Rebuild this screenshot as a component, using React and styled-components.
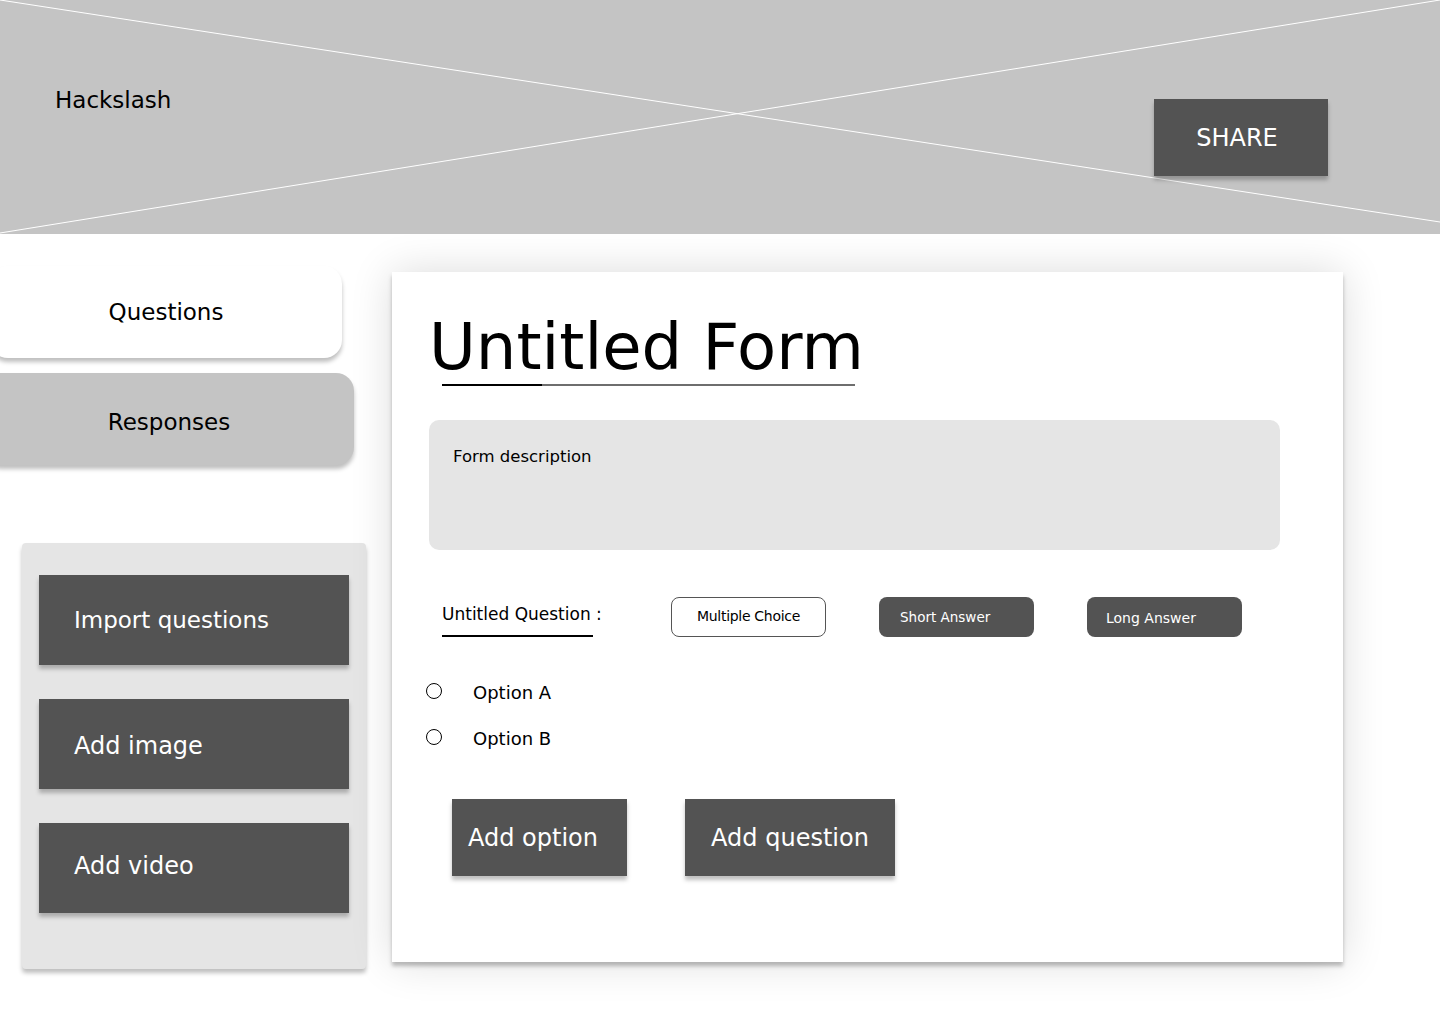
import React from "react";
import styled, { createGlobalStyle } from "styled-components";

const GlobalStyle = createGlobalStyle`
  html, body { margin: 0; padding: 0; background: #ffffff; }
  body {
    font-family: "DejaVu Sans", "Liberation Sans", sans-serif;
    color: #000;
    -webkit-font-smoothing: antialiased;
  }
  * { box-sizing: border-box; }
`;

const shiftY = (p) => {
  const d = p.$dy || 0;
  return `padding-top: ${Math.max(d * 2, 0)}px; padding-bottom: ${Math.max(-d * 2, 0)}px;`;
};

const Page = styled.div`
  width: 1440px;
  min-height: 1024px;
  overflow: hidden;
  background: #fff;
`;

const Header = styled.header`
  position: relative;
  height: 234px;
  display: flex;
  justify-content: space-between;
  align-items: flex-start;
  padding: 0 112px 0 55px;
  background-color: #c4c4c4;
`;

const Placeholder = styled.svg`
  position: absolute;
  inset: 0;
  width: 100%;
  height: 100%;
  pointer-events: none;
`;

const Brand = styled.div`
  position: relative;
  margin-top: 86px;
  font-size: 23px;
  line-height: 28px;
  color: #000;
`;

const DarkButton = styled.button`
  position: relative;
  border: none;
  background: #535353;
  color: #ffffff;
  font-family: inherit;
  font-size: ${(p) => p.$size || 24}px;
  width: ${(p) => p.$w}px;
  height: ${(p) => p.$h}px;
  box-shadow: 0 4px 4px rgba(0, 0, 0, 0.25);
  display: flex;
  align-items: center;
  justify-content: ${(p) => (p.$left !== undefined ? "flex-start" : "center")};
  padding-left: ${(p) => p.$left || 0}px;
  padding-right: ${(p) => p.$right || 0}px;
  ${shiftY}
  cursor: pointer;
`;

const ShareButton = styled(DarkButton)`
  margin-top: 99px;
`;

const Body = styled.div`
  display: flex;
  align-items: flex-start;
  gap: 26px;
`;

const LeftColumn = styled.aside`
  width: 366px;
  padding-top: 32px;
  display: flex;
  flex-direction: column;
`;

const Tab = styled.div`
  width: ${(p) => p.$w}px;
  margin-left: ${(p) => p.$offset}px;
  height: 92px;
  border-radius: 18px;
  background: ${(p) => (p.$active ? "#ffffff" : "#c4c4c4")};
  box-shadow: 0 4px 4px rgba(0, 0, 0, 0.25);
  display: flex;
  align-items: center;
  justify-content: center;
  ${shiftY}
  font-size: 23px;
  color: #000;
  & + & {
    margin-top: 15px;
  }
`;

const ToolPanel = styled.div`
  margin: 78px 0 0 22px;
  width: 344px;
  height: 426px;
  background: #e5e5e5;
  border-radius: 4px;
  box-shadow: 0 4px 4px rgba(0, 0, 0, 0.25);
  padding: 32px 17px 0;
  display: flex;
  flex-direction: column;
  gap: 34px;
`;

const Card = styled.main`
  margin-top: 38px;
  width: 951px;
  height: 690px;
  background: #ffffff;
  box-shadow: 0 4px 4px rgba(0, 0, 0, 0.25), 0 0 40px rgba(0, 0, 0, 0.14);
  padding: 43px 0 0 37px;
  display: flex;
  flex-direction: column;
  align-items: flex-start;
`;

const Title = styled.h1`
  margin: 0;
  font-weight: 400;
  font-size: 64px;
  line-height: 64px;
  color: #000;
`;

const TitleRule = styled.div`
  margin: 5px 0 0 13px;
  width: 413px;
  height: 2px;
  background: linear-gradient(to right, #000 0, #000 100px, #6e6e6e 100px, #6e6e6e 100%);
`;

const Description = styled.div`
  margin-top: 34px;
  width: 851px;
  height: 130px;
  background: #e5e5e5;
  border-radius: 10px;
  padding: 27px 0 0 24px;
  font-size: 16.5px;
  line-height: 20px;
  color: #000;
`;

const QuestionRow = styled.div`
  margin: 47px 0 0 13px;
  display: flex;
  align-items: flex-start;
`;

const QuestionLabel = styled.div`
  width: 229px;
  padding-top: 7px;
  font-size: 17px;
  line-height: 20px;
  color: #000;
`;

const LabelRule = styled.div`
  margin-top: 11px;
  width: 151px;
  height: 1.5px;
  background: #000;
`;

const Chips = styled.div`
  display: flex;
  gap: 53px;
`;

const Chip = styled.div`
  width: 155px;
  height: 40px;
  border-radius: 8px;
  display: flex;
  align-items: center;
  font-size: ${(p) => p.$size}px;
  letter-spacing: ${(p) => (p.$dark ? "0" : "-0.3px")};
  justify-content: ${(p) => (p.$dark ? "flex-start" : "center")};
  padding-left: ${(p) => (p.$dark ? p.$pad : 0)}px;
  ${shiftY}
  background: ${(p) => (p.$dark ? "#535353" : "#ffffff")};
  color: ${(p) => (p.$dark ? "#ffffff" : "#000000")};
  border: ${(p) => (p.$dark ? "none" : "1px solid #555555")};
`;

const Options = styled.div`
  margin: 44px 0 0 -3px;
  display: flex;
  flex-direction: column;
  gap: 24px;
`;

const OptionRow = styled.label`
  display: flex;
  align-items: center;
  gap: 31px;
  height: 22px;
  font-size: 18px;
  color: #000;
`;

const Radio = styled.span`
  width: 16px;
  height: 16px;
  border-radius: 50%;
  border: 1px solid #000;
  margin-top: -3px;
  flex: none;
`;

const ActionRow = styled.div`
  margin: 50px 0 0 23px;
  display: flex;
  gap: 58px;
`;

export default function App() {
  return (
    <Page>
      <GlobalStyle />
      <Header>
        <Placeholder viewBox="0 0 1440 234" preserveAspectRatio="none" aria-hidden="true">
          <line x1="0" y1="0" x2="1440" y2="222" stroke="#ffffff" strokeWidth="1" />
          <line x1="0" y1="233" x2="1440" y2="0" stroke="#ffffff" strokeWidth="1" />
        </Placeholder>
        <Brand>Hackslash</Brand>
        <ShareButton $w={174} $h={77} $right={8}>SHARE</ShareButton>
      </Header>
      <Body>
        <LeftColumn>
          <Tab $active $w={352} $offset={-10}>Questions</Tab>
          <Tab $w={370} $offset={-16} $dy={3}>Responses</Tab>
          <ToolPanel>
            <DarkButton $left={35} $w={310} $h={90} $size={23}>Import questions</DarkButton>
            <DarkButton $left={35} $w={310} $h={90} $size={24} $dy={2}>Add image</DarkButton>
            <DarkButton $left={35} $w={310} $h={90} $size={24} $dy={-2}>Add video</DarkButton>
          </ToolPanel>
        </LeftColumn>
        <Card>
          <Title>Untitled Form</Title>
          <TitleRule />
          <Description>Form description</Description>
          <QuestionRow>
            <QuestionLabel>
              Untitled Question :
              <LabelRule />
            </QuestionLabel>
            <Chips>
              <Chip $size={14} $dy={-1}>Multiple Choice</Chip>
              <Chip $dark $size={13.5} $pad={21}>Short Answer</Chip>
              <Chip $dark $size={14} $pad={19} $dy={0.5}>Long Answer</Chip>
            </Chips>
          </QuestionRow>
          <Options>
            <OptionRow>
              <Radio />
              Option A
            </OptionRow>
            <OptionRow>
              <Radio />
              Option B
            </OptionRow>
          </Options>
          <ActionRow>
            <DarkButton $left={16} $w={175} $h={77}>Add option</DarkButton>
            <DarkButton $w={210} $h={77}>Add question</DarkButton>
          </ActionRow>
        </Card>
      </Body>
    </Page>
  );
}
